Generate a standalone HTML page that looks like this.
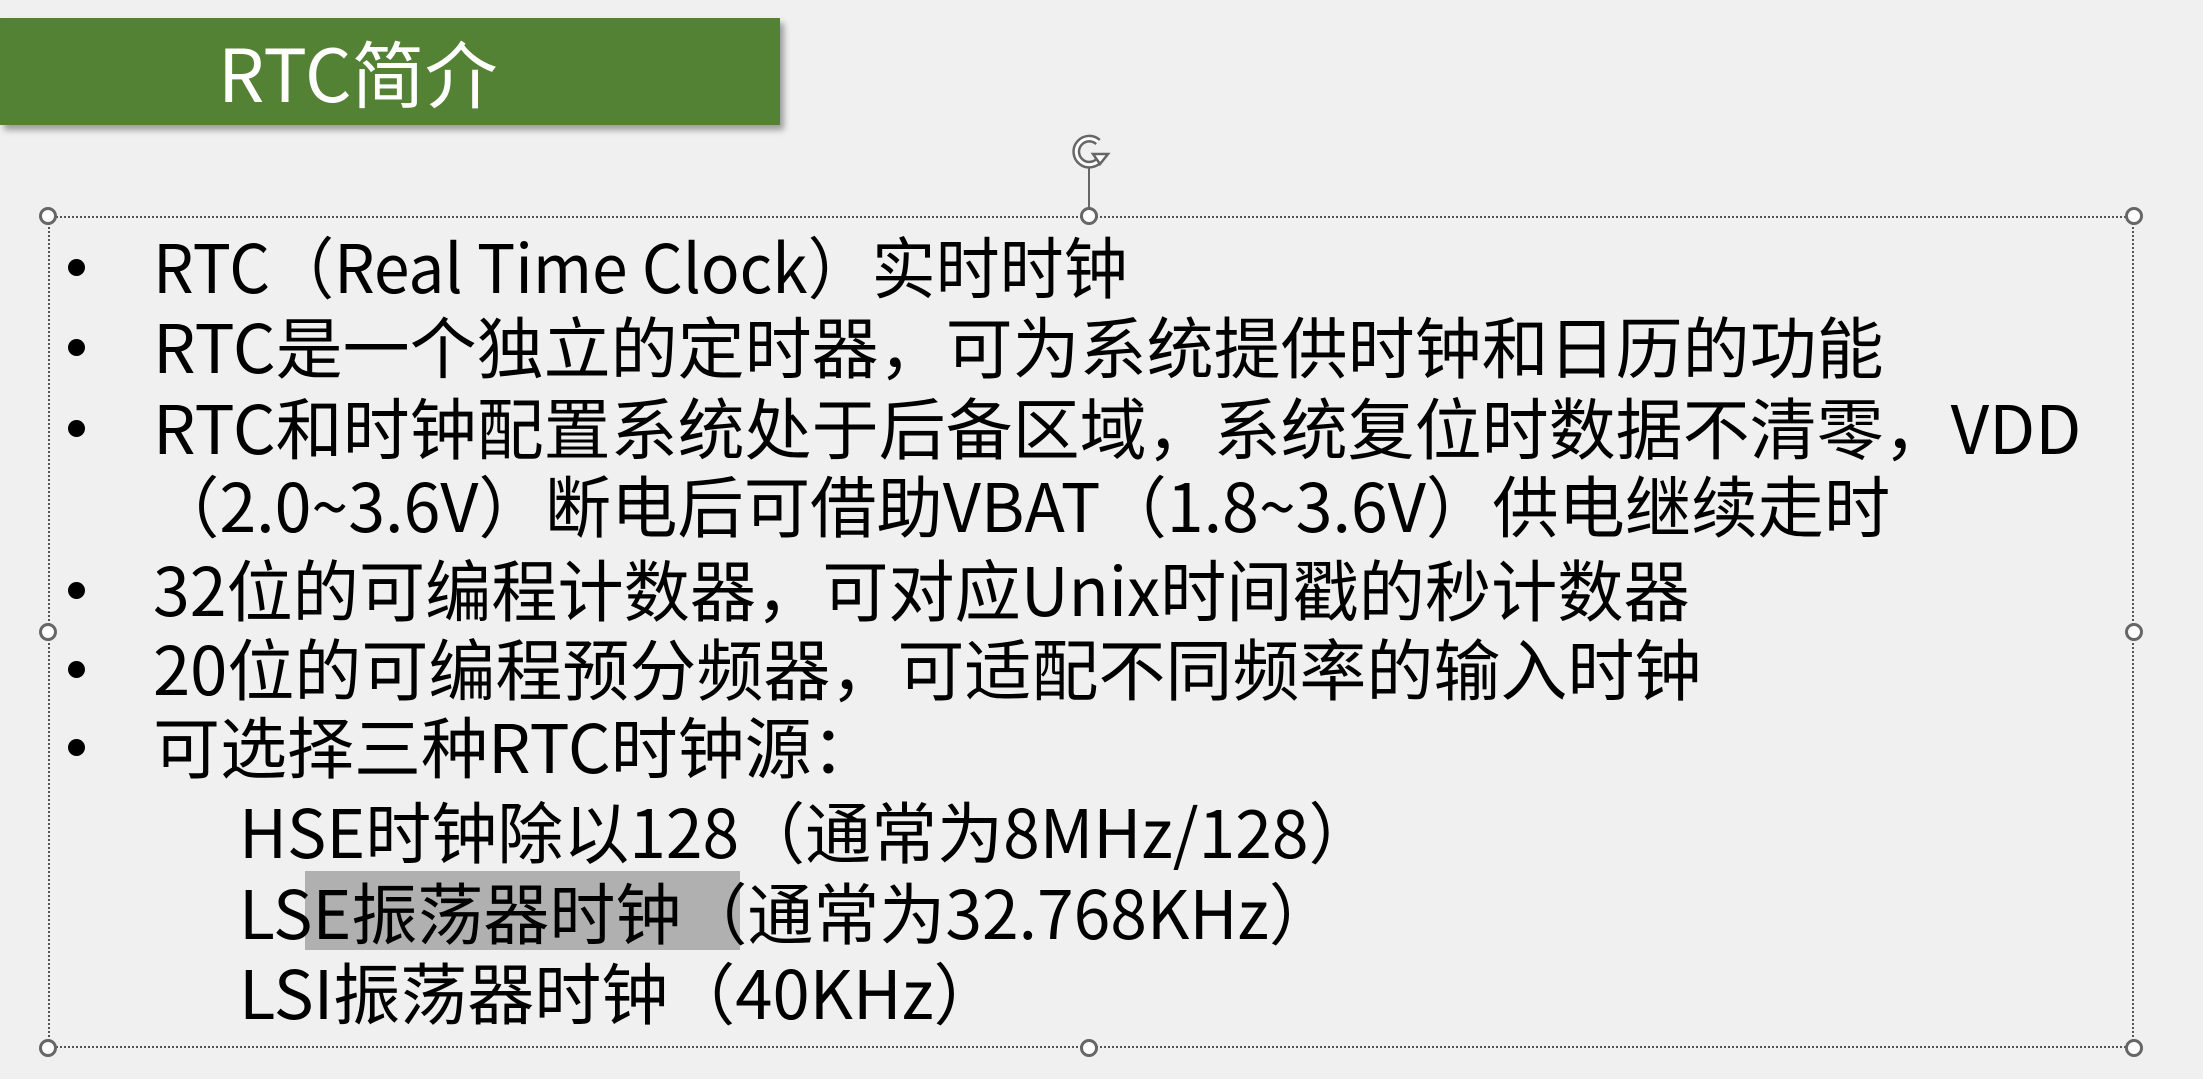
<!DOCTYPE html>
<html><head><meta charset="utf-8"><style>
html,body{margin:0;padding:0;background:#f0f0f0;width:2203px;height:1079px;overflow:hidden;position:relative;font-family:"Liberation Sans","Noto Sans CJK SC",sans-serif;}
.title{position:absolute;left:0;top:18px;width:780px;height:107px;background:#548235;box-shadow:4px 5px 6px rgba(0,0,0,0.35);}
.title span{position:absolute;left:218px;top:10px;font-size:73px;line-height:86px;color:#fff;font-family:"Noto Sans CJK SC",sans-serif;font-weight:400;}
.box{position:absolute;left:48px;top:216px;width:2086px;height:832px;border:2px dotted #555;box-sizing:border-box;}
.h{position:absolute;width:18px;height:18px;border:3px solid #666;border-radius:50%;background:#fff;box-sizing:border-box;}
.l{position:absolute;font-size:67px;line-height:80px;height:80px;white-space:nowrap;color:#000;font-family:"Noto Sans CJK SC",sans-serif;font-weight:400;transform-origin:0 50%;}
.b{position:absolute;left:68px;width:17px;height:17px;border-radius:50%;background:#000;}
.hl{position:absolute;left:305px;top:871px;width:435px;height:79px;background:#b0b0b0;}
</style></head><body>
<div class="title"><span>RTC简介</span></div>
<div class="box"></div>
<svg style="position:absolute;left:1068px;top:128px" width="44" height="88" viewBox="0 0 44 88">
<line x1="21" y1="40" x2="21" y2="88" stroke="#666" stroke-width="2"/>
<path d="M30 14 A13 13 0 1 0 32 31" fill="none" stroke="#666" stroke-width="8"/>
<path d="M30 14 A13 13 0 1 0 32 31" fill="none" stroke="#fff" stroke-width="3"/>
<path d="M25 26 L40 26 L32 36 Z" fill="#fff" stroke="#666" stroke-width="2.5"/>
</svg>
<div class="h" style="left:39px;top:207px"></div>
<div class="h" style="left:1080px;top:207px"></div>
<div class="h" style="left:2125px;top:207px"></div>
<div class="h" style="left:39px;top:623px"></div>
<div class="h" style="left:2125px;top:623px"></div>
<div class="h" style="left:39px;top:1039px"></div>
<div class="h" style="left:1080px;top:1039px"></div>
<div class="h" style="left:2125px;top:1039px"></div>
<div class="hl"></div>

<div class="b" style="top:259px"></div><div class="l" style="left:153px;top:225px;transform:scaleX(0.955)">RTC（Real Time Clock）实时时钟</div>
<div class="b" style="top:339px"></div><div class="l" style="left:153px;top:305px">RTC是一个独立的定时器，可为系统提供时钟和日历的功能</div>
<div class="b" style="top:420px"></div><div class="l" style="left:153px;top:386px">RTC和时钟配置系统处于后备区域，系统复位时数据不清零，VDD</div>
<div class="l" style="left:153px;top:464px;transform:scaleX(0.99)">（2.0~3.6V）断电后可借助VBAT（1.8~3.6V）供电继续走时</div>
<div class="b" style="top:582px"></div><div class="l" style="left:153px;top:548px;transform:scaleX(0.988)">32位的可编程计数器，可对应Unix时间戳的秒计数器</div>
<div class="b" style="top:661px"></div><div class="l" style="left:153px;top:627px">20位的可编程预分频器，可适配不同频率的输入时钟</div>
<div class="b" style="top:739px"></div><div class="l" style="left:153px;top:705px">可选择三种RTC时钟源：</div>
<div class="l" style="left:239px;top:790px;transform:scaleX(0.985)">HSE时钟除以128（通常为8MHz/128）</div>
<div class="l" style="left:239px;top:871px;transform:scaleX(0.985)">LSE振荡器时钟（通常为32.768KHz）</div>
<div class="l" style="left:239px;top:951px">LSI振荡器时钟（40KHz）</div>
</body></html>
